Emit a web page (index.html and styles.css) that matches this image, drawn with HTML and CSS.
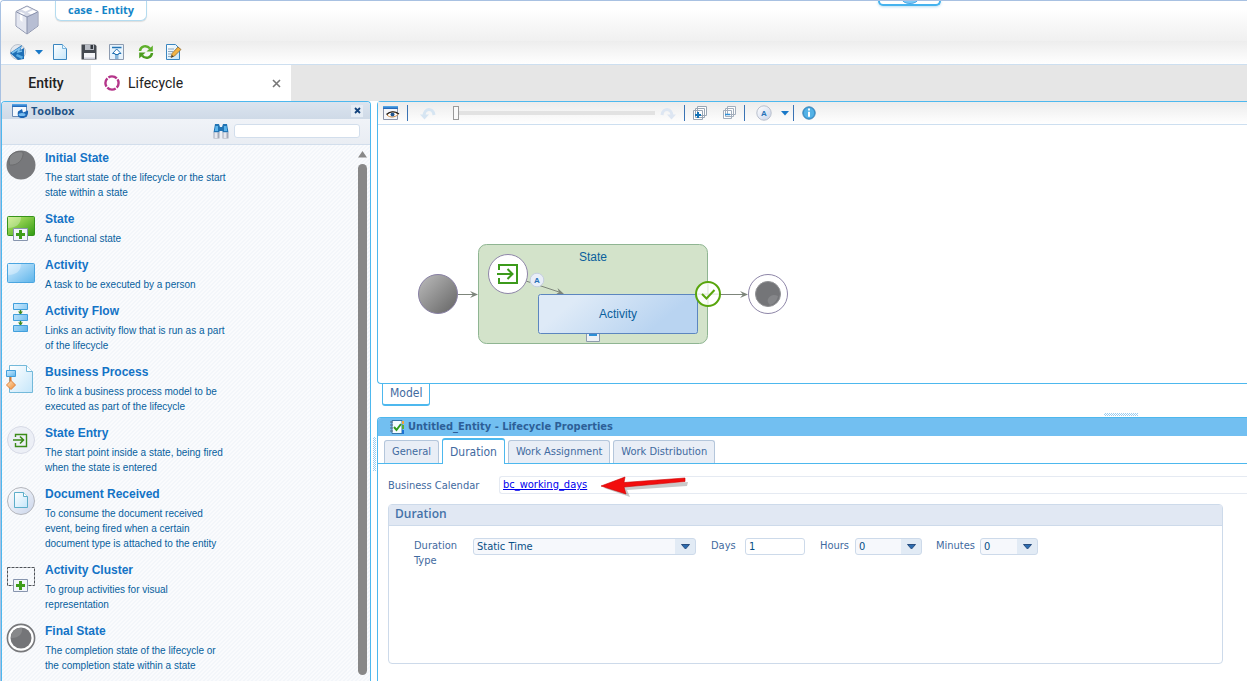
FILE: index.html
```html
<!DOCTYPE html>
<html lang="en">
<head>
<meta charset="utf-8">
<title>case - Entity</title>
<link rel="stylesheet" href="styles.css">
</head>
<body>
<svg class="defs" aria-hidden="true">
  <defs>
    <linearGradient id="gBlue" x1="0" y1="0" x2="1" y2="1"><stop offset="0" stop-color="#d3edff"/><stop offset="1" stop-color="#5db4ea"/></linearGradient>
    <linearGradient id="gPage" x1="0" y1="0" x2="1" y2="1"><stop offset="0" stop-color="#fff"/><stop offset="1" stop-color="#c5e6fa"/></linearGradient>
    <linearGradient id="gGreen" x1="0" y1="0" x2="1" y2="1"><stop offset="0" stop-color="#c6ee70"/><stop offset="1" stop-color="#2f9a12"/></linearGradient>
    <linearGradient id="gOrange" x1="0" y1="0" x2="1" y2="1"><stop offset="0" stop-color="#ffe4c0"/><stop offset="1" stop-color="#ef8a30"/></linearGradient>
    <linearGradient id="gGray" x1="0" y1="0" x2="1" y2="1"><stop offset="0" stop-color="#bdbdbd"/><stop offset="1" stop-color="#636363"/></linearGradient>
    <linearGradient id="gDisc" x1="0" y1="0" x2="1" y2="1"><stop offset="0" stop-color="#fff"/><stop offset="1" stop-color="#c9d4ea"/></linearGradient>
    <linearGradient id="gTask" x1="0" y1="0" x2="1" y2="0.3"><stop offset="0.25" stop-color="#deeaf7"/><stop offset="0.9" stop-color="#b9d4f1"/></linearGradient>
    <linearGradient id="gTitle" x1="0" y1="0" x2="0" y2="1"><stop offset="0" stop-color="#5cb0ee"/><stop offset="1" stop-color="#1b5fb4"/></linearGradient>
  </defs>
</svg>
<div class="app">
  <header class="header">
    <div class="header-top">
      <svg class="cube" width="28" height="30" viewBox="0 0 28 30"><path d="M14 1 25 6.500V21L14 29 3 21V6.500z" fill="#c9cddc" stroke="#8a92ab"/><path d="M3.500 7 14 12V28.500L3.500 21z" fill="#e3e6f0"/><path d="M14 12 24.500 7V21L14 28.500z" fill="#b7bed3"/><path d="M14 1.500 24.500 6.800 14 12 3.500 6.800z" fill="#d5d9e6"/><path d="M14 2 18 4 12.500 6.500 8.500 4.500zM20 5 24 7 18.500 9.500 14.500 7.500zM8 7 12 9 10 10 5 8z" fill="#fff"/><path d="M7 9 9.500 10V17L7 15z" fill="#fff"/><path d="M14 12V28.500M3.500 7 14 12 24.500 7" fill="none" stroke="#8790ab"/></svg>
      <h1 class="title-pill">case - Entity</h1>
      <button class="pull-down" aria-label="Show panel"><svg width="20" height="4" viewBox="0 0 20 4"><ellipse cx="10" cy="-1" rx="8" ry="4.500" fill="#7ccaf8" stroke="#4aa6e6"/></svg></button>
    </div>
    <div class="toolbar">
      <button class="tool" aria-label="Application"><svg width="18" height="18" viewBox="0 0 18 18"><circle cx="9" cy="9" r="7.500" fill="#e3e8ef" stroke="#b9c1cc"/><path d="M1 10 13 2 11.500 7 15 5V16L9 17z" fill="#1f6fb5"/><path d="M3 10 11 5 9 9 13 8" fill="none" stroke="#7fc2ee" stroke-width="1.500"/><path d="M8 11 14 13.500 13 16 7 13z" fill="#59aee6"/></svg></button>
      <button class="tool tool-caret" aria-label="Application menu"><svg width="8" height="5" viewBox="0 0 8 5"><path d="M0 0h8L4 4.500z" fill="#1878c8"/></svg></button>
      <button class="tool" aria-label="New"><svg width="18" height="18" viewBox="0 0 18 18"><path d="M1.500 1.500h9l4 4v11h-13z" fill="url(#gPage)" stroke="#3a86c0"/><path d="M10.500 1.500v4h4" fill="#e8f5ff" stroke="#78b4dc"/></svg></button>
      <button class="tool" aria-label="Save"><svg width="18" height="18" viewBox="0 0 18 18"><path d="M1.500 1.500H15L16.500 3v13.500h-15z" fill="#444950"/><path d="M5 1.500h9V7H5z" fill="#b8bcc4"/><path d="M10.500 2h2.500v4h-2.500z" fill="#33373e"/><path d="M4 10h11v6H4z" fill="#f4f5f8"/><path d="M4 14.500h11V16H4z" fill="#c9ccd8"/></svg></button>
      <button class="tool" aria-label="Check in"><svg width="18" height="18" viewBox="0 0 18 18"><path d="M1.500 1.500h14v15h-14z" fill="#e7f3fc" stroke="#8d9bb0"/><path d="M4 4.500h9.500" stroke="#2474b5" stroke-width="1.500"/><path d="M8.700 6 4.500 10.500h2.500v1h3.500v-1H13zM7 13h3.500M7 15h3.500" fill="#fff" stroke="#2474b5"/></svg></button>
      <button class="tool" aria-label="Refresh"><svg width="18" height="18" viewBox="0 0 18 18"><path d="M4 8C4.500 3 10.500 1.500 14 5.500" fill="none" stroke="#5fb02c" stroke-width="2.500"/><path d="M16.800 2.500v6h-6.300z" fill="#5fb02c"/><path d="M16 10c-.5 5-6.500 6.500-10 2.500" fill="none" stroke="#4b9c1e" stroke-width="2.500"/><path d="M3.200 15.500v-6h6.300z" fill="#4b9c1e"/></svg></button>
      <button class="tool" aria-label="Edit"><svg width="18" height="18" viewBox="0 0 18 18"><path d="M2.500 1.500h9l4 4v11h-13z" fill="url(#gPage)" stroke="#3a86c0"/><path d="M4 6h6M4 8.500h5M4 11h3M4 13.500h3" stroke="#8fa7bd"/><path d="M8 10.500 14 4l3 2.500L10.500 13 7 14.500z" fill="#f2b344" stroke="#8b6a35" stroke-width=".8"/><path d="M7.200 14.500 8 12l1.500 1.500z" fill="#333"/></svg></button>
    </div>
  </header>

  <nav class="doc-tabs">
    <button class="doc-tab doc-tab-entity">Entity</button>
    <div class="doc-tab doc-tab-active">
      <svg width="16" height="16" viewBox="0 0 16 16"><circle cx="8" cy="8" r="6.600" fill="none" stroke="#b5358a" stroke-width="2.400" stroke-dasharray="9.100 1.268" stroke-dashoffset="4"/></svg>
      <span class="doc-name">Lifecycle</span>
      <button class="doc-close" aria-label="Close Lifecycle"><svg width="9" height="9" viewBox="0 0 9 9"><path d="M1 1l7 7M8 1 1 8" stroke="#777" stroke-width="1.600"/></svg></button>
    </div>
  </nav>

  <main class="workspace">
    <aside class="toolbox">
      <div class="toolbox-head">
        <svg width="18" height="16" viewBox="0 0 18 16"><path d="M1.500 1.500h14v12h-14z" fill="#f5f9fd" stroke="#6a8bb5"/><path d="M1 1h15v3H1z" fill="url(#gTitle)"/><path d="M7 8.500 11 6l1 3.500 5-2c.5 5-1.500 7.500-6 7.500-3.500 0-5-2-4-6.500z" fill="#1c66b4"/><ellipse cx="11" cy="11.500" rx="3.500" ry="1.600" fill="#79bdf0"/></svg>
        <h2 class="toolbox-title">Toolbox</h2>
        <button class="toolbox-close" aria-label="Close toolbox"><svg width="7" height="7" viewBox="0 0 7 7"><path d="M1 1l5 5M6 1 1 6" stroke="#12427c" stroke-width="1.800"/></svg></button>
      </div>
      <div class="toolbox-search">
        <svg width="16" height="16" viewBox="0 0 16 16"><path d="M2 1h4l1 3h2l1-3h4l1.500 8.500H9.500V8h-3v1.500H.5z" fill="#2274b4"/><path d="M2.500 3h2.500v5H1.800zM11 3h2.500l.7 5H11z" fill="#5db5ec"/><path d="M.5 9.500h6v6h-6zM9.500 9.500h6v6h-6z" fill="#a3a9b8"/><path d="M1.500 9.500h3V15h-3zM10.500 9.500h3V15h-3z" fill="#e6e8ef"/></svg>
        <input class="search-input" type="text" aria-label="Search toolbox">
      </div>
      <div class="toolbox-body">
        <ul class="items">
          <li class="item"><svg class="item-icon" width="30" height="30" viewBox="0 0 30 30"><circle cx="15" cy="15" r="14.500" fill="#77787b"/><path d="M4 6A13.500 13.500 0 0 1 17 2c1 7-5 14-13.500 13A14 14 0 0 1 4 6z" fill="#858688" stroke="#6c6d6f"/></svg><div class="item-text"><h3>Initial State</h3><p>The start state of the lifecycle or the start state within a state</p></div></li>
          <li class="item"><svg class="item-icon" width="30" height="30" viewBox="0 0 30 30"><rect x="1.500" y="5.500" width="27" height="19" rx="1" fill="url(#gGreen)" stroke="#37941b"/><path d="M2 6h13c0 7-5 11-13 11z" fill="#fff" opacity=".3"/><path d="M7.500 17.500h14v12h-14z" fill="#f2f5fb" stroke="#8795ae"/><path d="M14.500 19v9M10 23.500h9" stroke="#3f9d1c" stroke-width="3"/></svg><div class="item-text"><h3>State</h3><p>A functional state</p></div></li>
          <li class="item"><svg class="item-icon" width="30" height="30" viewBox="0 0 30 30"><rect x="1.500" y="6.500" width="27" height="19" rx="1" fill="url(#gBlue)" stroke="#4aa5e0"/><path d="M2 7h13c0 7-5 11-13 11z" fill="#fff" opacity=".35"/></svg><div class="item-text"><h3>Activity</h3><p>A task to be executed by a person</p></div></li>
          <li class="item"><svg class="item-icon" width="30" height="30" viewBox="0 0 30 30"><path d="M14.500 7v15" stroke="#3c8a20" stroke-width="1.500"/><path d="M12 8.500h5l-2.500 3zM12 19.500h5l-2.500 3z" fill="#3c8a20"/><g fill="url(#gBlue)" stroke="#419fdc"><path d="M7.500.5h14v6h-14zM7.500 11.500h14v6h-14zM7.500 22.500h14v6h-14z"/></g></svg><div class="item-text"><h3>Activity Flow</h3><p>Links an activity flow that is run as a part of the lifecycle</p></div></li>
          <li class="item"><svg class="item-icon" width="30" height="30" viewBox="0 0 30 30"><path d="M3.500 1.500h17l6 6v21h-23z" fill="url(#gPage)" stroke="#73b9da"/><path d="M20.500 1.500v6h6" fill="#fff" stroke="#73b9da"/><path d="M4.500 12v5" stroke="#d77b35" stroke-width="2"/><path d="M.5 6.500h9v6h-9z" fill="url(#gBlue)" stroke="#419fdc"/><path d="M5 16.500 9.500 21 5 25.500.5 21z" fill="url(#gOrange)" stroke="#e0803a"/></svg><div class="item-text"><h3>Business Process</h3><p>To link a business process model to be executed as part of the lifecycle</p></div></li>
          <li class="item"><svg class="item-icon" width="30" height="30" viewBox="0 0 30 30"><circle cx="15" cy="15" r="13.500" fill="#eceff6" stroke="#d7dae6"/><path d="M9.500 12V9.500h11v12h-11V18" fill="none" stroke="#3b8b18" stroke-width="1.400"/><path d="M7 15h10M14 11.500l3.500 3.500-3.500 3.500" fill="none" stroke="#3b8b18" stroke-width="1.600"/></svg><div class="item-text"><h3>State Entry</h3><p>The start point inside a state, being fired when the state is entered</p></div></li>
          <li class="item"><svg class="item-icon" width="30" height="30" viewBox="0 0 30 30"><circle cx="15" cy="15" r="13.500" fill="url(#gDisc)" stroke="#b4b6bc"/><path d="M8.500 6.500h9l4 4v11h-13z" fill="url(#gPage)" stroke="#5daeca"/><path d="M17.500 6.500v4h4" fill="#fff" stroke="#5daeca"/></svg><div class="item-text"><h3>Document Received</h3><p>To consume the document received event, being fired when a certain document type is attached to the entity</p></div></li>
          <li class="item"><svg class="item-icon" width="30" height="30" viewBox="0 0 30 30"><path d="M1.500 5.500h27v18h-27z" fill="none" stroke="#4e5258" stroke-dasharray="3 1"/><path d="M7.500 17.500h14v12h-14z" fill="#f2f5fb" stroke="#8795ae"/><path d="M14.500 19v9M10 23.500h9" stroke="#3f9d1c" stroke-width="3"/></svg><div class="item-text"><h3>Activity Cluster</h3><p>To group activities for visual representation</p></div></li>
          <li class="item"><svg class="item-icon" width="30" height="30" viewBox="0 0 30 30"><circle cx="15" cy="15" r="13.600" fill="#fff" stroke="#77787b" stroke-width="1.600"/><circle cx="15" cy="15" r="10.500" fill="#747578"/><path d="M6 10A10.500 10.500 0 0 1 16 5c1 6-4 10.500-11 10a10 10 0 0 1 1-5z" fill="#87888a"/></svg><div class="item-text"><h3>Final State</h3><p>The completion state of the lifecycle or the completion state within a state</p></div></li>
        </ul>
        <div class="scrollbar"><svg width="9" height="7" viewBox="0 0 9 7"><path d="M4.500 0 9 6.500H0z" fill="#888"/></svg><span class="thumb"></span></div>
      </div>
    </aside>

    <div class="splitter"><span class="grip-v"></span></div>

    <section class="main-col">
      <div class="model">
        <div class="model-bar">
          <button class="tool" aria-label="View"><svg width="17" height="15" viewBox="0 0 17 15"><path d="M.5.500h14v13H.5z" fill="#f6f7fb" stroke="#8a93a8"/><path d="M0 0h15v3H0z" fill="url(#gTitle)"/><path d="M4 9c3-4 8-4 11-.5-3 3-8 3.500-11 .5z" fill="#fff" stroke="#c98742"/><path d="M3.500 8.500C7 5 12 5 16 8" fill="none" stroke="#222" stroke-width="1.300"/><circle cx="9.500" cy="8.500" r="2" fill="#24578f"/></svg></button>
          <span class="sep"></span>
          <button class="tool undo" aria-label="Undo" disabled><svg width="17" height="13" viewBox="0 0 17 13"><path d="M4 9C4 1 13 0 14 8" fill="none" stroke="#d6e5f2" stroke-width="3"/><path d="M0 7.500h9L4.500 12.500z" fill="#d6e5f2"/></svg></button>
          <input class="zoom" type="range" min="0" max="100" value="0" aria-label="History">
          <button class="tool" aria-label="Redo" disabled><svg width="17" height="13" viewBox="0 0 17 13"><path d="M13 9C13 1 4 0 3 8" fill="none" stroke="#dde6f2" stroke-width="3"/><path d="M17 7.500H8l4.500 5z" fill="#dde6f2"/></svg></button>
          <span class="sep sep-a"></span>
          <button class="tool expand" aria-label="Expand all"><svg width="15" height="14" viewBox="0 0 15 14"><g fill="#fff" stroke="#9aa6b4"><path d="M4.500.5h9v9h-9zM2.500 2.500h9v9h-9zM.5 4.500h9v9h-9z"/></g><path d="M5 6v6M2 9h6" stroke="#1673b6" stroke-width="2"/></svg></button>
          <button class="tool" aria-label="Collapse all"><svg width="14" height="14" viewBox="0 0 14 14"><g fill="#fff" stroke="#a3aebc"><path d="M4.500.5h8v8h-8zM2.500 2.500h8v8h-8zM.5 4.500h8v8h-8z"/></g><path d="M2 8.500h5" stroke="#2f8fd8" stroke-width="1.500"/></svg></button>
          <span class="sep sep-b"></span>
          <button class="tool" aria-label="Annotations"><svg width="16" height="16" viewBox="0 0 16 16"><circle cx="8" cy="8" r="7.200" fill="url(#gDisc)" stroke="#b9bfcc"/><text class="badge-text" x="8" y="11" text-anchor="middle">A</text></svg></button>
          <button class="tool annot-caret" aria-label="Annotation menu"><svg width="8" height="5" viewBox="0 0 8 5"><path d="M0 0h8L4 4.500z" fill="#1878c8"/></svg></button>
          <span class="sep sep-c"></span>
          <button class="tool" aria-label="Information"><svg width="14" height="14" viewBox="0 0 14 14"><circle cx="7" cy="7" r="6.200" fill="#3b9fdc" stroke="#3d83b4"/><circle cx="7" cy="7" r="5" fill="#5fbbea" opacity=".7"/><path d="M7 5.800v5M7 2.600v2" stroke="#fff" stroke-width="2"/></svg></button>
        </div>
        <div class="canvas">
          <svg class="diagram" width="390" height="120" viewBox="0 0 390 120">
            <rect x="68.500" y="9.500" width="229" height="99" rx="8" fill="#d3e3ca" stroke="#8fb592"/>
            <g fill="none" stroke="#7d857b"><path d="M48 59.500h18M116 46l36 12M288 59.500h49"/></g>
            <g fill="#7d857b"><path d="M68 59.500l-8-3.500 3 3.500-3 3.500zM338 59.500l-8-3.500 3 3.500-3 3.500zM154 59l-6.500-6 1.500 4.200-3.800 2.600z"/></g>
            <circle cx="28" cy="59" r="19.500" fill="url(#gGray)" stroke="#8880a4"/>
            <circle cx="98" cy="39" r="19.500" fill="#fff" stroke="#8e86a8"/>
            <path d="M89 35v-5h18v18H89v-5" fill="none" stroke="#3c9a1b" stroke-width="2"/><path d="M87 39h15M97.500 34 102.500 39l-5 5" fill="none" stroke="#3c9a1b" stroke-width="2"/>
            <circle cx="127" cy="45" r="6.800" fill="#e9eef8" stroke="#c5cfdf"/><text class="badge-text" x="127" y="48" text-anchor="middle">A</text>
            <path d="M176.500 93.500h13v13h-13z" fill="#edf1f6" stroke="#8e9cac"/><path d="M179 96h8v5h-8z" fill="#2d8fd6"/>
            <rect x="128.500" y="59.500" width="159" height="39" rx="2" fill="url(#gTask)" stroke="#5c86bf"/>
            <circle cx="298" cy="59" r="12" fill="#fff" fill-opacity=".9" stroke="#58a50c" stroke-width="2"/><path d="M298 48v22M287 59h22" stroke="#e0e8da"/><path d="M292 59l4.500 4.500 8-8.500" fill="none" stroke="#58a50c" stroke-width="2"/>
            <circle cx="358" cy="59" r="19.500" fill="#fff" stroke="#8e86a8"/><circle cx="358" cy="59" r="12.500" fill="#747578" stroke="#909194"/><path d="M358 64c2-4 6-5 10-3-1 5-4 8-8 9-2-2-3-4-2-6z" fill="#858689"/>
            <text class="node-text" x="183" y="26" text-anchor="middle">State</text>
            <text class="node-text" x="208" y="83" text-anchor="middle">Activity</text>
          </svg>
        </div>
      </div>
      <div class="model-tabs"><button class="model-tab">Model</button><span class="grip-h"></span></div>

      <div class="props">
        <div class="props-head">
          <svg width="17" height="16" viewBox="0 0 17 16"><path d="M3 1.500h10v13H3z" fill="#f4fbff" stroke="#3474a8"/><path d="M1 3h3M1 6h3M1 9h3M1 12h3" stroke="#596b80"/><path d="M13 2h2v3h-2z" fill="#efa53a"/><path d="M13 6h2v4h-2z" fill="#58ae34"/><path d="M13 11h2v4h-2z" fill="#1c72d4"/><path d="M5 8l2.500 3L12 5" fill="none" stroke="#2f9a1c" stroke-width="2"/></svg>
          <h2 class="props-title">Untitled_Entity - Lifecycle Properties</h2>
        </div>
        <div class="tabs" role="tablist">
          <button class="tab" role="tab">General</button>
          <button class="tab tab-active" role="tab" aria-selected="true">Duration</button>
          <button class="tab" role="tab">Work Assignment</button>
          <button class="tab" role="tab">Work Distribution</button>
        </div>
        <div class="props-body">
          <div class="calendar-row">
            <span class="label calendar-label">Business Calendar</span>
            <div class="calendar-value"><a href="#calendar">bc_working_days</a>
              <svg class="arrow" width="98" height="24" viewBox="0 0 98 24"><path d="M11 12 34 6l-1 4 62-4-1 4-60 4 3 7z" fill="#777" opacity=".4"/><path d="M8 10 32 1l-1 5.500L92 2v3.500L31 11l2 7z" fill="#f20d0d" stroke="#c90000" stroke-width=".6"/></svg>
            </div>
          </div>
          <section class="group">
            <h3 class="group-title">Duration</h3>
            <div class="fields">
              <label class="label label-type" for="type">Duration Type</label>
              <div class="select select-type"><select id="type"><option>Static Time</option></select><svg class="caret" width="11" height="6" viewBox="0 0 11 6"><path d="M1.500.500h8l-4 4.500z" fill="#2b6cb0" stroke="#2a4f80"/></svg></div>
              <label class="label label-days" for="days">Days</label>
              <input class="days" id="days" type="text" value="1">
              <label class="label label-hours" for="hours">Hours</label>
              <div class="select select-hours"><select id="hours"><option>0</option></select><svg class="caret" width="11" height="6" viewBox="0 0 11 6"><path d="M1.500.500h8l-4 4.500z" fill="#2b6cb0" stroke="#2a4f80"/></svg></div>
              <label class="label label-minutes" for="minutes">Minutes</label>
              <div class="select select-minutes"><select id="minutes"><option>0</option></select><svg class="caret" width="11" height="6" viewBox="0 0 11 6"><path d="M1.500.500h8l-4 4.500z" fill="#2b6cb0" stroke="#2a4f80"/></svg></div>
            </div>
          </section>
        </div>
      </div>
    </section>
  </main>
</div>
</body>
</html>
```
FILE: styles.css
```css
* { box-sizing: border-box; }
body { margin: 0; font-family: "DejaVu Sans Condensed", "Open Sans", sans-serif; font-size: 11px; color: #3f6aa0; background: #fff; }
h1, h2, h3, p, ul { margin: 0; padding: 0; }
button { border: 0; padding: 0; background: none; font: inherit; color: inherit; cursor: pointer; }
svg { display: block; flex: none; }
.defs { position: absolute; width: 0; height: 0; }

.app { display: flex; flex-direction: column; height: 100vh; overflow: hidden; border-top: 1px solid #a8c1e2; border-left: 1px solid #a8c1e2; border-top-left-radius: 4px; }

.header { flex: none; border-bottom: 1px solid #cddff0; }
.header-top { position: relative; display: flex; align-items: flex-start; height: 40px; padding-left: 12px; background: linear-gradient(#fff 20%, #f0f0f0); }
.cube { margin-top: 4px; }
.title-pill { margin-left: 14px; height: 20px; padding: 0 12px; border: 1px solid #b4dcf0; border-top: 0; border-radius: 0 0 6px 6px; background: #fff; font-family: "Open Sans", sans-serif; font-size: 11px; line-height: 18px; font-weight: 700; color: #1585c8; box-shadow: 0 1px 1px #ddd; }
.pull-down { position: absolute; top: -1px; right: 306px; display: flex; justify-content: center; width: 63px; height: 6px; border: 2px solid #45b3ee; border-top: 0; border-radius: 0 0 5px 5px; background: #fff; box-shadow: 0 1px 3px #b9dff5; }
.toolbar { display: flex; align-items: center; gap: 10px; height: 23px; padding: 0 0 1px 8px; background: linear-gradient(#ededed, #fff); }
.tool { display: flex; align-items: center; justify-content: center; }
.tool-caret { margin: 0 -1px 0 -2px; }

.doc-tabs { flex: none; display: flex; height: 36px; background: #e6e6e6; font-family: Roboto, sans-serif; font-size: 14px; color: #222; }
.doc-tab { display: flex; align-items: center; }
.doc-tab-entity { justify-content: center; width: 90px; background: #ededed; font-weight: 500; }
.doc-tab-active { width: 200px; padding: 0 10px 0 13px; background: #fff; }
.doc-name { margin-left: 8px; flex: 1; }

.workspace { display: flex; flex: 1; min-height: 0; }
.toolbox { display: flex; flex-direction: column; flex: none; width: 370px; border: 1px solid #4db8ee; border-bottom: 0; border-radius: 4px 4px 0 0; overflow: hidden; }
.toolbox-head { display: flex; flex: none; align-items: center; height: 17px; padding: 0 7px 0 9px; background: linear-gradient(#dbe4ef, #cfdae7); }
.toolbox-title { flex: 1; margin-left: 2px; font-family: "Open Sans", sans-serif; font-size: 11px; line-height: 16px; color: #1f5386; }
.toolbox-close { display: flex; align-items: center; justify-content: center; width: 12px; height: 12px; background: #e6edf5; }
.toolbox-search { display: flex; flex: none; align-items: center; gap: 5px; height: 26px; padding: 0 10px 1px 211px; border-bottom: 1px solid #d2deec; background: linear-gradient(#f0f3f8, #e9edf3); }
.search-input { flex: 1; min-width: 0; height: 14px; padding: 0 3px; border: 1px solid #d2deec; border-radius: 3px; background: #fff; font: inherit; }
.toolbox-body { display: flex; flex: 1; min-height: 0; background: linear-gradient(135deg, #f3f6fa 25%, #fafbfd 25% 50%, #f3f6fa 50% 75%, #fafbfd 75%) 0 0 / 4px 4px; }
.items { flex: 1; padding: 5px 0 0 4px; overflow: hidden; list-style: none; }
.item { display: flex; gap: 9px; margin-bottom: 11px; }
.item-text { width: 184px; font-family: "Liberation Sans", Arial, sans-serif; }
.item-text h3 { font-size: 12px; line-height: 16px; color: #1373c6; }
.item-text p { margin-top: 4px; font-size: 10px; line-height: 15px; color: #075f9d; }
.scrollbar { display: flex; flex: none; flex-direction: column; align-items: center; gap: 6px; width: 15px; padding: 6px 1px 6px 0; }
.thumb { flex: 1; width: 9px; border-radius: 5px; background: #888; }
.splitter { display: flex; flex: none; align-items: flex-start; justify-content: center; width: 6px; }
.grip-v { width: 3px; height: 34px; margin-top: 336px; background: conic-gradient(#9ccdf0 25%, #fff 0 50%, #9ccdf0 0 75%, #fff 0) 0 0 / 2px 2px; }

.main-col { display: flex; flex: 1; flex-direction: column; min-width: 0; }
.model { flex: none; border: 1px solid #4db8ee; border-right: 0; border-radius: 4px 0 0 4px; }
.model-bar { display: flex; align-items: center; height: 23px; padding-left: 5px; border-bottom: 1px solid #cddff0; background: linear-gradient(#ececec, #fff); }
.sep { width: 1px; height: 16px; margin-left: 7px; background: #3a73b4; }
.undo { margin-left: 12px; }
.zoom { appearance: none; width: 202px; height: 16px; margin: 0 4px 0 16px; background: linear-gradient(#e2e2e2, #e2e2e2) center / 100% 4px no-repeat; }
.zoom::-webkit-slider-thumb { appearance: none; width: 6px; height: 14px; border: 1px solid #9a9a9a; background: #fafafa; }
.sep-a { margin-left: 8px; }
.expand { margin: 0 15px 0 8px; }
.sep-b { margin: 0 11px 0 7px; }
.annot-caret { margin-left: 9px; }
.sep-c { margin: 0 8px 0 4px; }
.canvas { position: relative; height: 258px; overflow: hidden; }
.diagram { position: absolute; left: 32px; top: 110px; }
.node-text { font: 12px "Liberation Sans", Arial, sans-serif; fill: #0a609c; }
.badge-text { font: bold 8px "Liberation Sans", Arial, sans-serif; fill: #2673b8; }
.model-tabs { display: flex; flex: none; align-items: flex-start; justify-content: space-between; height: 33px; padding: 0 109px 0 5px; }
.model-tab { height: 22px; padding: 1px 7px 3px; border: 1px solid #4db8ee; border-top: 0; border-bottom-width: 2px; border-radius: 0 0 3px 3px; font-size: 12px; line-height: 16px; }
.grip-h { width: 34px; height: 3px; margin-top: 29px; background: conic-gradient(#9ccdf0 25%, #fff 0 50%, #9ccdf0 0 75%, #fff 0) 0 0 / 2px 2px; }

.props { display: flex; flex: 1; flex-direction: column; border-top: 1px solid #4db8ee; border-left: 1px solid #4db8ee; border-radius: 4px 0 0 0; overflow: hidden; }
.props-head { display: flex; align-items: center; gap: 2px; height: 18px; padding-left: 11px; background: #72bff1; }
.props-title { font-size: 11px; line-height: 16px; color: #2d5f98; }
.tabs { display: flex; align-items: flex-end; gap: 3px; height: 28px; padding-left: 6px; border-bottom: 1px solid #4db8ee; }
.tab { height: 23px; padding: 0 7px; border: 1px solid #b4c6db; border-bottom: 0; border-radius: 3px 3px 0 0; background: #e9eef6; line-height: 22px; }
.tab-active { height: 26px; margin-bottom: -1px; border: 1px solid #4db8ee; border-top-width: 2px; border-bottom: 0; background: #fff; font-size: 12px; }
.props-body { padding: 12px 0 0 10px; }
.label { line-height: 15px; color: #3f6aa0; }
.calendar-row { display: flex; align-items: center; height: 18px; }
.calendar-label { width: 111px; }
.calendar-value { position: relative; display: flex; flex: 1; align-items: center; height: 18px; padding-left: 3px; border: 1px solid #e5eaf2; border-right: 0; border-radius: 3px 0 0 3px; }
.calendar-value a { color: #0000ee; line-height: 16px; }
.arrow { position: absolute; left: 93px; top: -1px; }
.group { height: 160px; margin: 10px 24px 0 0; border: 1px solid #cddaea; border-radius: 4px; }
.group-title { height: 21px; padding-left: 6px; border-bottom: 1px solid #cddaea; background: #e1e8f3; font-family: "Open Sans", sans-serif; font-size: 12px; line-height: 18px; font-weight: 600; color: #4472a8; }
.fields { display: flex; align-items: flex-start; padding: 12px 0 0 25px; }
.select { position: relative; height: 17px; }
.select select { display: block; width: 100%; height: 17px; padding: 0 3px; appearance: none; border: 1px solid #cddaea; border-radius: 3px; background: linear-gradient(#e2ebf5, #e2ebf5) right / 20px 100% no-repeat #f6f8fc; font: inherit; color: #084f86; }
.caret { position: absolute; right: 5px; top: 6px; pointer-events: none; }
.label-type { width: 59px; padding-right: 10px; }
.select-type { width: 223px; }
.label-days { width: 34px; margin-left: 15px; }
.days { width: 60px; height: 17px; padding: 0 3px; border: 1px solid #cddaea; border-radius: 3px; font: inherit; color: #084f86; }
.label-hours { width: 35px; margin-left: 15px; }
.select-hours { width: 67px; }
.label-minutes { width: 44px; margin-left: 14px; }
.select-minutes { width: 58px; }
```
